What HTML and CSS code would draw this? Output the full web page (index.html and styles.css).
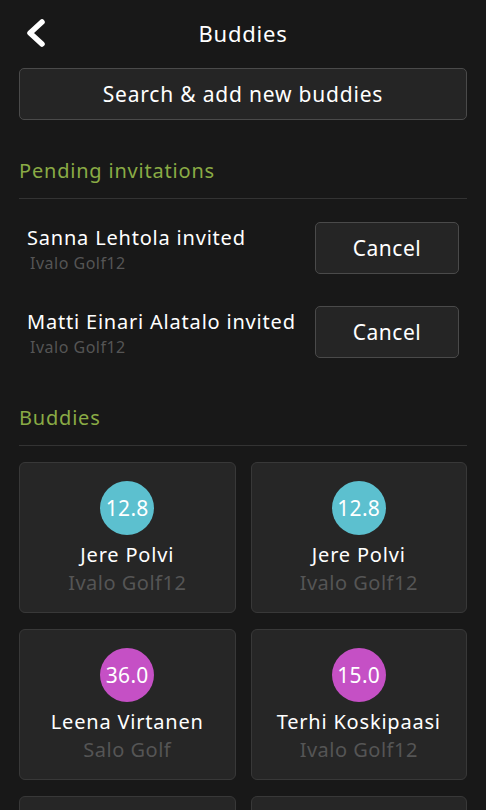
FILE: index.html
```html
<!DOCTYPE html>
<html lang="en">
<head>
    <meta charset="UTF-8">
    <meta name="viewport" content="width=device-width, initial-scale=1.0">
    <title>Buddies</title>
    <link rel="stylesheet" href="styles.css">
</head>
<body>

<header class="topbar">
    <a class="back" href="#">
        <svg width="24" height="30" viewBox="0 0 24 30">
            <path d="M18 4 L6 15 L18 26" fill="none" stroke="#fff" stroke-width="5.5" stroke-linecap="round" stroke-linejoin="round"/>
        </svg>
    </a>
    <h1>Buddies</h1>
</header>

<div class="page">
    <button class="search-btn">Search &amp; add new buddies</button>

    <h2 class="section-title pending-title">Pending invitations</h2>

    <div class="invites">
        <div class="invite">
            <div class="invite-info">
                <div class="invite-name">Sanna Lehtola invited</div>
                <div class="invite-club">Ivalo Golf12</div>
            </div>
            <button class="cancel-btn">Cancel</button>
        </div>
        <div class="invite">
            <div class="invite-info">
                <div class="invite-name">Matti Einari Alatalo invited</div>
                <div class="invite-club">Ivalo Golf12</div>
            </div>
            <button class="cancel-btn">Cancel</button>
        </div>
    </div>

    <h2 class="section-title buddies-title">Buddies</h2>

    <div class="buddy-grid">
        <div class="buddy">
            <div class="hcp teal">12.8</div>
            <div class="buddy-name">Jere Polvi</div>
            <div class="buddy-club">Ivalo Golf12</div>
        </div>
        <div class="buddy">
            <div class="hcp teal">12.8</div>
            <div class="buddy-name">Jere Polvi</div>
            <div class="buddy-club">Ivalo Golf12</div>
        </div>
        <div class="buddy">
            <div class="hcp pink">36.0</div>
            <div class="buddy-name">Leena Virtanen</div>
            <div class="buddy-club">Salo Golf</div>
        </div>
        <div class="buddy">
            <div class="hcp pink">15.0</div>
            <div class="buddy-name">Terhi Koskipaasi</div>
            <div class="buddy-club">Ivalo Golf12</div>
        </div>
        <!-- next row, scrolled below the fold -->
        <div class="buddy"></div>
        <div class="buddy"></div>
    </div>
</div>

</body>
</html>
```

FILE: styles.css
```css
body {
    background: #181818;
    color: #fff;
    font-family: "Noto Sans", Arial, sans-serif;
    margin: 0;
    padding: 0;
    overflow: hidden;
    letter-spacing: 0.8px;
}
.topbar {
    position: relative;
    height: 66px;
    display: flex;
    align-items: center;
    justify-content: center;
}
.topbar h1 {
    margin: 0;
    font-size: 22px;
    font-weight: normal;
}
.back {
    position: absolute;
    left: 24px;
    top: 18px;
    display: block;
}
.page {
    padding: 0 19px;
}
button {
    font-family: inherit;
    letter-spacing: inherit;
    color: #fff;
    background: #252525;
    border: 1px solid #4a4a4a;
    border-radius: 5px;
    cursor: pointer;
}
.search-btn {
    display: block;
    width: 100%;
    height: 52px;
    margin-top: 2px;
    font-size: 21px;
}
.section-title {
    margin: 0;
    color: #8aab45;
    font-size: 20px;
    font-weight: normal;
    line-height: 28px;
    padding-bottom: 13px;
    border-bottom: 1px solid #333;
}
.pending-title {
    margin-top: 37px;
}
.buddies-title {
    margin-top: 46px;
}
.invites {
    padding: 23px 8px 0;
    display: flex;
    flex-direction: column;
    gap: 32px;
}
.invite {
    display: flex;
    align-items: center;
    justify-content: space-between;
    height: 52px;
}
.invite-info {
    margin-top: 3px;
}
.invite-name {
    font-size: 20px;
    line-height: 24px;
}
.invite-club {
    color: #555;
    font-size: 16px;
    line-height: 22px;
    padding-top: 2px;
    padding-left: 3px;
    letter-spacing: 0.5px;
}
.cancel-btn {
    width: 144px;
    height: 52px;
    font-size: 21px;
    letter-spacing: 0.5px;
}
.buddy-grid {
    margin-top: 16px;
    display: grid;
    grid-template-columns: 1fr 1fr;
    column-gap: 15px;
    row-gap: 16px;
}
.buddy {
    height: 151px;
    box-sizing: border-box;
    background: #262626;
    border: 1px solid #383838;
    border-radius: 6px;
    padding-top: 18px;
    display: flex;
    flex-direction: column;
    align-items: center;
}
.hcp {
    width: 54px;
    height: 54px;
    border-radius: 50%;
    display: flex;
    align-items: center;
    justify-content: center;
    font-size: 21px;
    letter-spacing: 0.3px;
}
.teal {
    background: #5cc0cf;
}
.pink {
    background: #c550c5;
}
.buddy-name {
    margin-top: 6px;
    font-size: 20px;
    line-height: 28px;
}
.buddy-club {
    color: #555;
    font-size: 20px;
    line-height: 28px;
    letter-spacing: 0.5px;
}
```
